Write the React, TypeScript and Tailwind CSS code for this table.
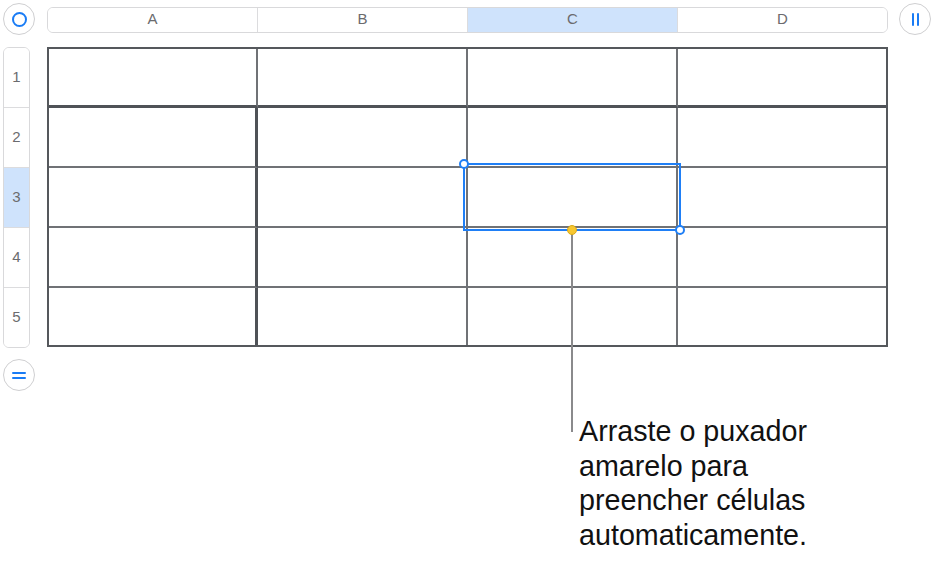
const cols = ["A", "B", "C", "D"];
const rows = [1, 2, 3, 4, 5];

// column widths inside the 2px outer frame, row heights likewise
const colW = ["w-[209px]", "w-[210px]", "w-[210px]", "w-[208px]"];
const rowH = ["h-[59px]", "h-[60px]", "h-[60px]", "h-[60px]", "h-[57px]"];

function CellBorder(r: number, c: number) {
  let cls = "";
  if (c < 3) {
    cls += r > 0 && c === 0 ? " border-r-[3px] border-r-[#4f5257]" : " border-r-2 border-r-[#707276]";
  }
  if (r < 4) {
    cls += r === 0 ? " border-b-[3px] border-b-[#4f5257]" : " border-b-2 border-b-[#707276]";
  }
  return cls;
}

export default function App() {
  return (
    <div className="relative w-[935px] h-[563px] bg-white overflow-hidden pt-[3px] pl-[3px] font-['Liberation_Sans',Arial,sans-serif]">
      {/* top strip */}
      <div className="flex items-center h-[32px]">
        <button className="w-[32px] h-[32px] rounded-full border border-[#cfcfd1] bg-white flex items-center justify-center shrink-0">
          <span className="w-[15px] h-[15px] rounded-full border-2 border-[#1a7cf5]" />
        </button>
        <div className="ml-[12px] w-[841px] h-[26px] mt-[1px] flex rounded-[6px] border border-[#d9d9db] overflow-hidden">
          {cols.map((c, i) => (
            <div
              key={c}
              className={`${colW[i]} ${i === 0 ? "w-[210px]" : ""} flex items-center justify-center text-[15px] text-[#6b6b6e] ${
                i < 3 ? "border-r border-[#dcdcde]" : "flex-1"
              } ${c === "C" ? "bg-[#cfe3fc]" : "bg-white"}`}
            >
              {c}
            </div>
          ))}
        </div>
        <button className="ml-[11px] w-[32px] h-[32px] rounded-full border border-[#cfcfd1] bg-white flex items-center justify-center gap-[3px] shrink-0">
          <span className="w-[2px] h-[13px] bg-[#1a7cf5] rounded-sm" />
          <span className="w-[2px] h-[13px] bg-[#1a7cf5] rounded-sm" />
        </button>
      </div>

      {/* body */}
      <div className="flex mt-[12px]">
        <div className="flex flex-col w-[32px]">
          <div className="w-[27px] h-[301px] rounded-[6px] border border-[#d9d9db] overflow-hidden flex flex-col">
            {rows.map((r) => (
              <div
                key={r}
                className={`h-[60px] flex items-center justify-center text-[15px] text-[#6b6b6e] ${
                  r < 5 ? "border-b border-[#dcdcde]" : "flex-1"
                } ${r === 3 ? "bg-[#cfe3fc]" : "bg-white"}`}
              >
                {r}
              </div>
            ))}
          </div>
          <button className="mt-[11px] w-[32px] h-[32px] rounded-full border border-[#cfcfd1] bg-white flex flex-col items-center justify-center gap-[3px]">
            <span className="w-[14px] h-[2px] bg-[#1a7cf5] rounded-sm" />
            <span className="w-[14px] h-[2px] bg-[#1a7cf5] rounded-sm" />
          </button>
        </div>

        <div className="ml-[12px] w-[841px] h-[300px] border-2 border-[#55585c] flex flex-col">
          {rows.map((r, ri) => (
            <div key={r} className={`flex ${rowH[ri]}`}>
              {cols.map((c, ci) => (
                <div key={c} className={`${colW[ci]} h-full box-border${CellBorder(ri, ci)}`} />
              ))}
            </div>
          ))}
        </div>
      </div>

      {/* selection and fill handle */}
      <div className="absolute left-[463px] top-[163px] w-[218px] h-[68px] border-2 border-[#1f7ff6]" />
      <span className="absolute left-[459px] top-[159px] w-[10px] h-[10px] rounded-full bg-white border-2 border-[#1f7ff6]" />
      <span className="absolute left-[675px] top-[225px] w-[10px] h-[10px] rounded-full bg-white border-2 border-[#1f7ff6]" />
      <div className="absolute left-[571px] top-[231px] w-[2px] h-[201px] bg-[#8a8a8c]" />
      <span className="absolute left-[567px] top-[225px] w-[10px] h-[10px] rounded-full bg-[#f7c730] border border-[#d9a91a]" />

      {/* callout */}
      <p className="absolute left-[579px] top-[414px] text-[28.7px] leading-[34.5px] text-[#111]">
        Arraste o puxador
        <br />
        amarelo para
        <br />
        preencher células
        <br />
        automaticamente.
      </p>
    </div>
  );
}
